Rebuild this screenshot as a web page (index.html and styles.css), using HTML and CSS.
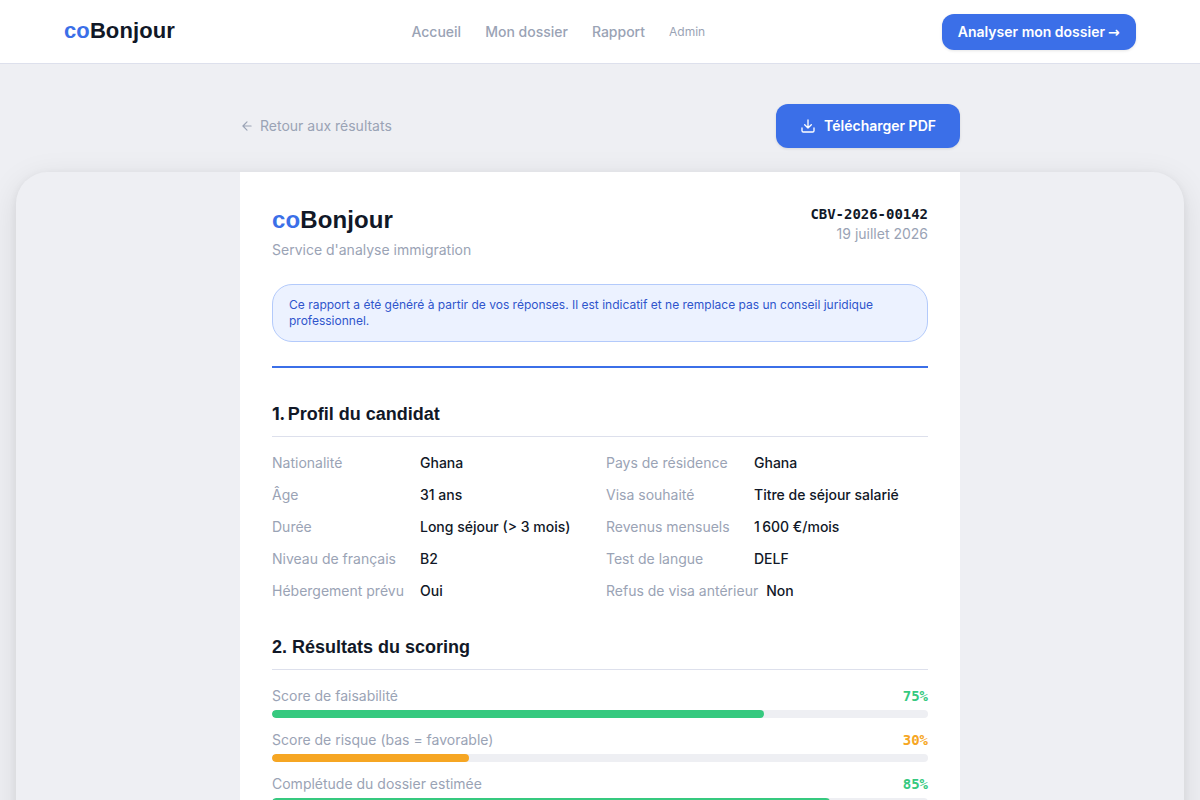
FILE: index.html
```
<!DOCTYPE html>
<html lang="fr">
<head>
  <meta charset="UTF-8" />
  <meta name="viewport" content="width=device-width, initial-scale=1.0" />
  <title>coBonjour - Rapport</title>
  <link rel="stylesheet" href="styles.css">
</head>
<body>
  <header class="navbar">
    <a class="logo nav-logo" href="#"><span>co</span>Bonjour</a>
    <nav class="nav-links">
      <a href="#">Accueil</a>
      <a href="#">Mon dossier</a>
      <a href="#">Rapport</a>
      <a class="admin" href="#">Admin</a>
    </nav>
    <a class="btn btn-small" href="#">Analyser mon dossier <span class="arrow">→</span></a>
  </header>

  <div class="toolbar">
    <a class="back" href="#">
      <svg width="14" height="14" viewBox="0 0 24 24" fill="none" stroke="currentColor" stroke-width="2" stroke-linecap="round" stroke-linejoin="round"><path d="M19 12H5M12 19l-7-7 7-7" /></svg>
      Retour aux résultats
    </a>
    <button class="btn">
      <svg width="16" height="16" viewBox="0 0 24 24" fill="none" stroke="currentColor" stroke-width="2" stroke-linecap="round" stroke-linejoin="round"><path d="M21 15v4a2 2 0 0 1-2 2H5a2 2 0 0 1-2-2v-4M7 10l5 5 5-5M12 15V3" /></svg>
      Télécharger PDF
    </button>
  </div>

  <main class="sheet">
    <article class="report">
      <div class="report-head">
        <div>
          <div class="logo report-logo"><span>co</span>Bonjour</div>
          <p class="tagline">Service d'analyse immigration</p>
        </div>
        <div class="report-ref">
          <p class="ref">CBV-2026-00142</p>
          <p>19 juillet 2026</p>
        </div>
      </div>
      <p class="notice">Ce rapport a été généré à partir de vos réponses. Il est indicatif et ne remplace pas un conseil juridique professionnel.</p>
      <hr class="divider">

      <section>
        <h2><span class="one">1.</span> Profil du candidat</h2>
        <dl class="profile">
          <div><dt>Nationalité</dt><dd>Ghana</dd></div>
          <div><dt>Pays de résidence</dt><dd>Ghana</dd></div>
          <div><dt>Âge</dt><dd>31 ans</dd></div>
          <div><dt>Visa souhaité</dt><dd>Titre de séjour salarié</dd></div>
          <div><dt>Durée</dt><dd>Long séjour (&gt; 3 mois)</dd></div>
          <div><dt>Revenus mensuels</dt><dd>1&#8239;600 €/mois</dd></div>
          <div><dt>Niveau de français</dt><dd>B2</dd></div>
          <div><dt>Test de langue</dt><dd>DELF</dd></div>
          <div><dt>Hébergement prévu</dt><dd>Oui</dd></div>
          <div><dt>Refus de visa antérieur</dt><dd>Non</dd></div>
        </dl>
      </section>

      <section>
        <h2>2. Résultats du scoring</h2>
        <div class="scores">
          <div class="score green">
            <div class="score-row"><span>Score de faisabilité</span><b>75%</b></div>
            <div class="bar"><div class="fill" style="width: 75%"></div></div>
          </div>
          <div class="score orange">
            <div class="score-row"><span>Score de risque (bas = favorable)</span><b>30%</b></div>
            <div class="bar"><div class="fill" style="width: 30%"></div></div>
          </div>
          <div class="score green">
            <div class="score-row"><span>Complétude du dossier estimée</span><b>85%</b></div>
            <div class="bar"><div class="fill" style="width: 85%"></div></div>
          </div>
        </div>
      </section>
    </article>
  </main>
</body>
</html>
```
FILE: styles.css
```
* {
  box-sizing: border-box;
  margin: 0;
  padding: 0;
}
body {
  font-family: Inter, sans-serif;
  font-size: 14px;
  line-height: 20px;
  height: 100vh;
  overflow: hidden;
  background: #eeeff3;
  color: #111827;
}
a {
  color: inherit;
  text-decoration: none;
}

/* Navigation */
.navbar {
  display: flex;
  align-items: center;
  justify-content: space-between;
  height: 64px;
  padding: 0 64px;
  background: #fff;
  border-bottom: 1px solid #dde0ec;
}
.logo {
  font-family: "Liberation Sans", sans-serif;
  font-size: 22px;
  font-weight: 700;
  line-height: 32px;
  letter-spacing: 0.1px;
}
.logo span {
  color: #3b6fe8;
}
.nav-logo {
  padding-bottom: 2px;
}
.nav-links {
  display: flex;
  align-items: center;
  gap: 24px;
  color: #9aa3b5;
  font-weight: 500;
}
.nav-links .admin {
  font-size: 12px;
  font-weight: 400;
}
.btn {
  display: flex;
  align-items: center;
  gap: 8px;
  height: 44px;
  padding: 0 24px;
  border: none;
  border-radius: 12px;
  background: #3b6fe8;
  box-shadow: 0 1px 3px rgba(0, 0, 0, 0.1);
  color: #fff;
  font: 600 14px/20px Inter, sans-serif;
  cursor: pointer;
}
.btn-small {
  gap: 3px;
  height: 36px;
  padding: 0 16px;
}
.arrow {
  width: 12px;
  font-family: "DejaVu Sans", sans-serif;
  font-size: 14px;
}

/* Back link + download */
.toolbar {
  display: flex;
  align-items: center;
  justify-content: space-between;
  width: 720px;
  margin: 40px auto 24px;
}
.back {
  display: flex;
  align-items: center;
  gap: 6px;
  color: #9aa3b5;
}

/* Report */
.sheet {
  margin: 0 16px;
  border-radius: 32px;
  box-shadow: 0 8px 32px rgba(0, 0, 0, 0.1), 0 2px 8px rgba(0, 0, 0, 0.06);
}
.report {
  width: 720px;
  margin: 0 auto;
  padding: 32px;
  background: #fff;
}
.report-head {
  display: flex;
  justify-content: space-between;
  margin-bottom: 24px;
}
.report-logo {
  font-size: 24px;
}
.tagline {
  margin-top: 4px;
  color: #9aa3b5;
}
.report-ref {
  text-align: right;
  color: #9aa3b5;
}
.ref,
.score b {
  font-family: "DejaVu Sans Mono", monospace;
  font-weight: 700;
  letter-spacing: -0.03px;
}
.ref {
  color: #111827;
}
.notice {
  padding: 12px 16px;
  border: 1px solid #b3cafb;
  border-radius: 20px;
  background: #ecf2ff;
  color: #2f55cc;
  font-size: 12px;
  line-height: 16px;
}
.divider {
  height: 2px;
  margin: 24px 0 32px;
  border: none;
  background: #3b6fe8;
}
section {
  margin-bottom: 32px;
}
h2 {
  padding-bottom: 8px;
  margin-bottom: 16px;
  border-bottom: 1px solid #dde0ec;
  font: 700 18px/28px "Liberation Sans", sans-serif;
}
h2 .one {
  margin-right: -2px;
  font-family: Inter, sans-serif;
  letter-spacing: -0.5px;
}
.profile {
  display: grid;
  grid-template-columns: 1fr 1fr;
  gap: 12px;
}
.profile div {
  display: flex;
  gap: 8px;
}
.profile dt {
  min-width: 140px;
  color: #9aa3b5;
}
.profile dd {
  font-weight: 500;
}

/* Scores */
.scores {
  display: flex;
  flex-direction: column;
  gap: 12px;
}
.score-row {
  display: flex;
  justify-content: space-between;
  margin-bottom: 4px;
  color: #9aa3b5;
}
.bar {
  height: 8px;
  border-radius: 4px;
  background: #eeeff3;
  overflow: hidden;
}
.fill {
  height: 100%;
  border-radius: 4px;
}
.green b {
  color: #36c97f;
}
.green .fill {
  background: #36c97f;
}
.orange b {
  color: #f6a623;
}
.orange .fill {
  background: #f6a623;
}
```
